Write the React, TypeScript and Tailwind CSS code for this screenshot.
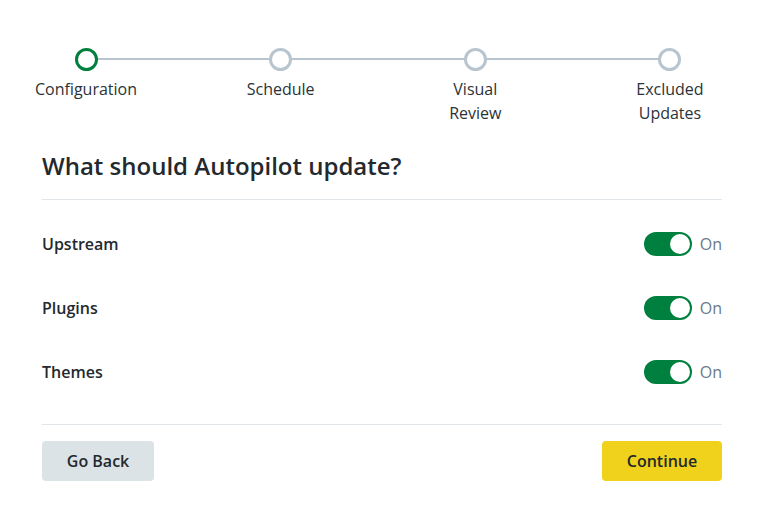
import React from "react";

const steps = [
  { label: ["Configuration"], active: true },
  { label: ["Schedule"], active: false },
  { label: ["Visual", "Review"], active: false },
  { label: ["Excluded", "Updates"], active: false },
];

const rows = ["Upstream", "Plugins", "Themes"];

function Toggle() {
  return (
    <div className="flex items-center gap-[8px]">
      <div className="w-[48px] h-[24px] rounded-full bg-[#00803e] flex items-center justify-end pr-[2px]">
        <div className="w-[20px] h-[20px] rounded-full bg-white" />
      </div>
      <span className="text-[16px] leading-[24px] text-[#6a7b86]">On</span>
    </div>
  );
}

export default function App() {
  return (
    <div
      className="w-[763px] h-[508px] bg-white text-[#23292e]"
      style={{ fontFamily: '"Open Sans", "Noto Sans", sans-serif' }}
    >
      <div className="ml-[42px] w-[680px] pt-[48px]">
        <div className="relative -ml-[8px] w-[688px] flex justify-between">
          <div className="absolute top-[10px] left-[52px] right-[52px] h-[2px] bg-[#b8c5ce]" />
          {steps.map((s, i) => (
            <div key={i} className="relative w-[104px] flex flex-col items-center">
              <div
                className={
                  s.active
                    ? "w-[23px] h-[23px] rounded-full border-[3px] border-[#00803e] bg-white"
                    : "w-[23px] h-[23px] rounded-full border-[3px] border-[#b8c5ce] bg-white"
                }
              />
              <div className="mt-[6px] text-center text-[16px] leading-[24px] text-[#2b3338] whitespace-nowrap">
                {s.label.map((l, j) => (
                  <div key={j}>{l}</div>
                ))}
              </div>
            </div>
          ))}
        </div>

        <h1 className="mt-[25px] text-[24px] leading-[32px] font-semibold text-[#23292e]">
          What should Autopilot update?
        </h1>
        <div className="mt-[17px] h-px bg-[#dfe5e8]" />

        <div className="pt-[12px] pb-[20px]">
          {rows.map((r) => (
            <div key={r} className="h-[64px] flex items-center justify-between">
              <span className="text-[16px] font-semibold leading-[24px]">{r}</span>
              <Toggle />
            </div>
          ))}
        </div>
        <div className="h-px bg-[#dfe5e8]" />

        <div className="mt-[16px] flex justify-between">
          <button className="w-[112px] h-[40px] rounded-[4px] bg-[#dce3e6] text-[16px] font-semibold text-[#23292e]">
            Go Back
          </button>
          <button className="w-[120px] h-[40px] rounded-[4px] bg-[#f0d11b] text-[16px] font-semibold text-[#23292e]">
            Continue
          </button>
        </div>
      </div>
    </div>
  );
}
